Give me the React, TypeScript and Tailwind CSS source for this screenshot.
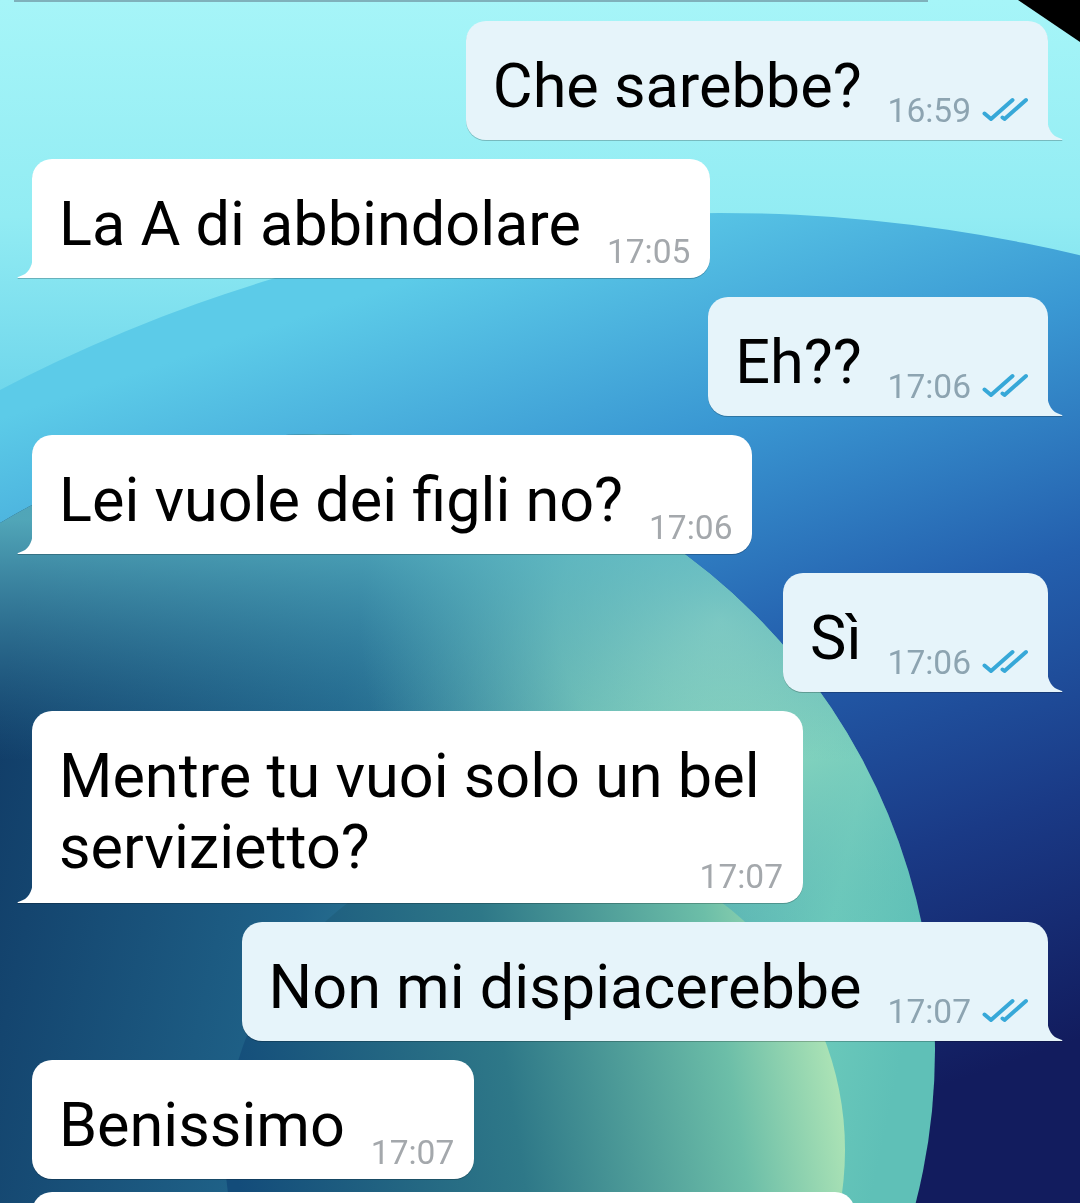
import React from "react";

type Msg = {
  text: string;
  time: string;
  out?: boolean;
  tail?: boolean;
  lines?: [string, string];
  gap?: string;
};

const messages: Msg[] = [
  { text: "Che sarebbe?", time: "16:59", out: true, gap: "mt-[19px]" },
  { text: "La A di abbindolare", time: "17:05", gap: "mt-[19px]" },
  { text: "Eh??", time: "17:06", out: true, gap: "mt-[19px]" },
  { text: "Lei vuole dei figli no?", time: "17:06", gap: "mt-[19px]" },
  { text: "Sì", time: "17:06", out: true, gap: "mt-[19px]" },
  {
    text: "Mentre tu vuoi solo un bel servizietto?",
    lines: ["Mentre tu vuoi solo un bel", "servizietto?"],
    time: "17:07",
    gap: "mt-[19px]",
  },
  { text: "Non mi dispiacerebbe", time: "17:07", out: true, gap: "mt-[19px]" },
  { text: "Benissimo", time: "17:07", tail: false, gap: "mt-[19px]" },
];

function Wallpaper() {
  return (
    <svg className="absolute inset-0" width="1080" height="1203" viewBox="0 0 1080 1203">
      <defs>
        <linearGradient id="bg" x1="0" y1="0" x2="0" y2="1203" gradientUnits="userSpaceOnUse">
          <stop offset="0" stopColor="#a6f5f8" />
          <stop offset="0.18" stopColor="#92ecf3" />
          <stop offset="0.35" stopColor="#6ad3ea" />
          <stop offset="1" stopColor="#3f9fd6" />
        </linearGradient>
        <linearGradient id="big" x1="600" y1="215" x2="900" y2="1100" gradientUnits="userSpaceOnUse">
          <stop offset="0" stopColor="#5ccbe8" />
          <stop offset="0.25" stopColor="#3a98d3" />
          <stop offset="0.5" stopColor="#2460ae" />
          <stop offset="0.75" stopColor="#1a3a86" />
          <stop offset="1" stopColor="#121c5e" />
        </linearGradient>
        <linearGradient id="ring" x1="0" y1="700" x2="935" y2="900" gradientUnits="userSpaceOnUse">
          <stop offset="0" stopColor="#113d68" />
          <stop offset="0.35" stopColor="#1f6288" />
          <stop offset="0.72" stopColor="#4ea7ad" />
          <stop offset="0.9" stopColor="#6ccabb" />
          <stop offset="1" stopColor="#5fc0b7" />
        </linearGradient>
        <radialGradient id="glow" cx="720" cy="620" r="360" gradientUnits="userSpaceOnUse">
          <stop offset="0" stopColor="#a8e8c8" stopOpacity="1" />
          <stop offset="0.45" stopColor="#8ad8c0" stopOpacity="0.75" />
          <stop offset="1" stopColor="#5fb5b8" stopOpacity="0" />
        </radialGradient>
        <linearGradient id="glowTop" x1="0" y1="520" x2="0" y2="760" gradientUnits="userSpaceOnUse">
          <stop offset="0" stopColor="#5cb8c6" stopOpacity="0.85" />
          <stop offset="1" stopColor="#3a8fb0" stopOpacity="0" />
        </linearGradient>
        <linearGradient id="sphere" x1="225" y1="1100" x2="845" y2="1000" gradientUnits="userSpaceOnUse">
          <stop offset="0" stopColor="#134c7a" />
          <stop offset="0.45" stopColor="#2e7888" />
          <stop offset="0.8" stopColor="#6cbea8" />
          <stop offset="1" stopColor="#b8eab8" />
        </linearGradient>
      </defs>
      <rect width="1080" height="1203" fill="url(#bg)" />
      <circle cx="720" cy="1766" r="1553" fill="url(#big)" />
      <circle cx="319" cy="1050" r="616" fill="url(#ring)" />
      <circle cx="319" cy="1050" r="616" fill="url(#glow)" />
      <circle cx="319" cy="1050" r="616" fill="url(#glowTop)" />
      <circle cx="535" cy="1150" r="310" fill="url(#sphere)" />
      <polygon points="1018,0 1080,0 1080,42" fill="#000" />
    </svg>
  );
}

function Ticks() {
  return (
    <svg width="46" height="26" viewBox="0 0 46 26" className="shrink-0">
      <path d="M2.5 16.5 L9 22 L30.5 3" fill="none" stroke="#37a8d8" strokeWidth="4" strokeLinecap="round" strokeLinejoin="round" />
      <path d="M20.5 20.5 L22.5 22 L44 3" fill="none" stroke="#37a8d8" strokeWidth="4" strokeLinecap="round" strokeLinejoin="round" />
    </svg>
  );
}

function Tail({ out, color }: { out?: boolean; color: string }) {
  return (
    <svg
      width="16"
      height="22"
      viewBox="0 0 16 22"
      className={out ? "absolute bottom-0 right-[-15px]" : "absolute bottom-0 left-[-15px] -scale-x-100"}
    >
      <path d="M0 0 C1 12 5 18 13.5 20.4 C16 21 16 22 14 22 L0 22 Z" fill={color} />
    </svg>
  );
}

function Bubble({ m }: { m: Msg }) {
  const tail = m.tail !== false;
  const bg = m.out ? "#e6f4fa" : "#ffffff";
  const shape = !tail ? "rounded-[20px]" : m.out ? "rounded-[20px] rounded-br-none" : "rounded-[20px] rounded-bl-none";
  const timeColor = m.out ? "text-[#8da4b1]" : "text-[#a4a8ac]";

  return (
    <div
      className={`relative ${m.gap} ${m.out ? "self-end mr-[32px]" : "self-start ml-[32px]"} drop-shadow-[0_1px_0.6px_rgba(0,0,0,0.22)]`}
    >
      <div className={`${shape} ${m.out ? "bg-[#e6f4fa]" : "bg-white"} pl-[27px] ${m.out ? "pr-[20px]" : "pr-[20px]"}`}>
        {m.lines ? (
          <div className="flex w-[724px] flex-col">
            <div className="pt-[30px] text-[61.2px] leading-[71px] text-black whitespace-nowrap">{m.lines[0]}</div>
            <div className="flex items-end justify-between">
              <div className="pb-[20px] text-[61.2px] leading-[71px] text-black">{m.lines[1]}</div>
              <div className={`mb-[10px] text-[33.5px] leading-[32px] ${timeColor}`}>{m.time}</div>
            </div>
          </div>
        ) : (
          <div className="flex items-end">
            <div className="pt-[30px] pb-[18px] text-[61.2px] leading-[71px] text-black whitespace-nowrap">{m.text}</div>
            <div className={`ml-[26px] ${m.out ? "mb-[13px]" : "mb-[10px]"} text-[33.5px] leading-[32px] ${timeColor}`}>
              {m.time}
            </div>
            {m.out && (
              <div className="mb-[17px] ml-[11px]">
                <Ticks />
              </div>
            )}
          </div>
        )}
      </div>
      {tail && <Tail out={m.out} color={bg} />}
    </div>
  );
}

export default function App() {
  return (
    <div className="relative h-[1203px] w-[1080px] overflow-hidden font-['Roboto',sans-serif]">
      <Wallpaper />
      <div className="relative flex flex-col">
        <div className="ml-[14px] h-[2px] w-[914px] bg-[#7fb1bb]" />
        {messages.map((m, i) => (
          <Bubble key={i} m={m} />
        ))}
        <div className="relative ml-[32px] mt-[13px] h-[119px] w-[823px] rounded-[20px] bg-white drop-shadow-[0_1px_0.6px_rgba(0,0,0,0.22)]" />
      </div>
    </div>
  );
}
